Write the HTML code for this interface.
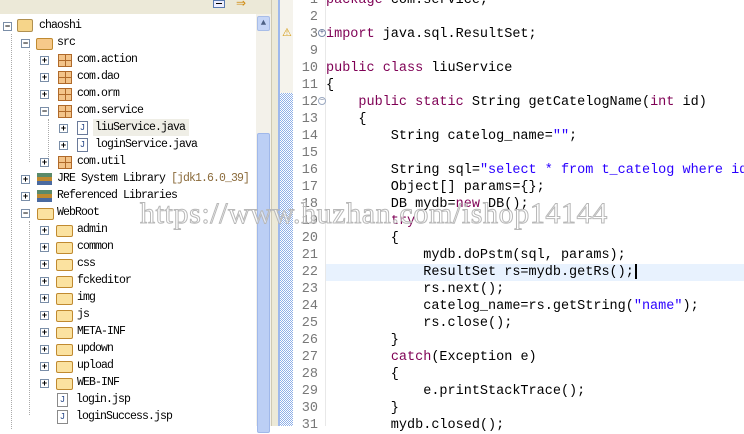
<!DOCTYPE html>
<html><head><meta charset="utf-8"><style>
*{margin:0;padding:0;box-sizing:border-box}
body{width:744px;height:426px;overflow:hidden;background:#fff;position:relative;font-family:"Liberation Mono",monospace}
.abs{position:absolute}
.tr{position:absolute;height:17px;line-height:17px;font-size:11.5px;letter-spacing:-0.9px;color:#000;white-space:nowrap}
.tg{position:absolute;width:9px;height:9px;border:1px solid #7a8ea8;background:#fff;font-size:9px;line-height:7px;text-align:center;color:#000;font-family:"Liberation Sans",sans-serif;font-weight:bold}
.pk{position:absolute;width:14px;height:13px;border:1px solid #b06a2a;background:linear-gradient(90deg,transparent 6px,#b06a2a 6px,#b06a2a 7px,transparent 7px),linear-gradient(0deg,transparent 5px,#b06a2a 5px,#b06a2a 6px,transparent 6px),#f3c48a}
.fd{position:absolute;width:17px;height:12px;border:1px solid #c08a30;border-radius:2px;background:#fbe2a0}
.ln{position:absolute;left:293px;width:25px;text-align:right;font-size:13.5px;color:#787878;height:17px;line-height:17px}
.cd{position:absolute;left:326px;font-size:13.5px;height:17px;line-height:17px;white-space:pre;color:#000}
.k{color:#7f0055}.s{color:#2a00ff}
#tree{position:absolute;left:0;top:3px;width:256px;height:430px}
#code{position:absolute;left:0;top:1px;width:744px;height:430px}
</style></head><body>
<div class="abs" style="left:0;top:0;width:280px;height:14px;background:#ece9d8"></div>
<div class="abs" style="left:213px;top:0;width:12px;height:8px;border:1px solid #5a7ab0;background:#eef;"></div>
<div class="abs" style="left:216px;top:3px;width:6px;height:1px;background:#000"></div>
<div class="abs" style="left:236px;top:0;font-size:12px;color:#d08a10;line-height:8px">⇒</div>
<div class="abs" style="left:256px;top:14px;width:15px;height:412px;background:#f3f1ea"></div>
<div class="abs" style="left:257px;top:16px;width:13px;height:15px;background:#c6d6f7;border:1px solid #a8bde8;border-radius:2px;color:#4d6185;font-size:9px;text-align:center;line-height:13px">▲</div>
<div class="abs" style="left:257px;top:133px;width:13px;height:300px;background:#bccff5;border:1px solid #a0b8ea;border-radius:2px"></div>
<div class="abs" style="left:271px;top:0;width:8px;height:426px;background:#ece9d8;border-left:1px solid #cfc9b4"></div>
<div class="abs" style="left:278px;top:0;width:2px;height:426px;background:#9eb8ec"></div>
<div class="abs" style="left:280px;top:0;width:13px;height:93px;background:#f5f3ec"></div>
<div class="abs" style="left:280px;top:93px;width:13px;height:333px;background:repeating-conic-gradient(#8fb0e8 0 25%,#fff 0 50%) 0 0/2px 2px"></div>
<div class="abs" style="left:282px;top:26px;color:#d49a10;font-size:11px">⚠</div>
<div class="abs" style="left:325px;top:0;width:1px;height:426px;background:#e8e8e8"></div>
<div class="abs" style="left:326px;top:264px;width:418px;height:17px;background:#e8f2fe"></div>
<div id="tree">
<div class="abs" style="left:11px;top:31px;height:395px;border-left:1px dotted #aaa"></div>
<div class="abs" style="left:29px;top:48px;height:111px;border-left:1px dotted #aaa"></div>
<div class="abs" style="left:48px;top:116px;height:42px;border-left:1px dotted #aaa"></div>
<div class="abs" style="left:29px;top:218px;height:194px;border-left:1px dotted #aaa"></div>
<div class="tg" style="left:3px;top:19px">−</div><div class="abs" style="left:17px;top:16px;width:16px;height:13px;background:#f6d58a;border:1px solid #b09050;border-radius:2px"></div><div class="tr" style="left:39px;top:14px">chaoshi</div>
<div class="tg" style="left:21px;top:36px">−</div><div class="fd" style="left:36px;top:35px;background:#f6c98a"></div><div class="tr" style="left:57px;top:31px">src</div>
<div class="tg" style="left:40px;top:53px">+</div><div class="pk" style="left:58px;top:51px"></div><div class="tr" style="left:77px;top:48px">com.action</div>
<div class="tg" style="left:40px;top:70px">+</div><div class="pk" style="left:58px;top:68px"></div><div class="tr" style="left:77px;top:65px">com.dao</div>
<div class="tg" style="left:40px;top:87px">+</div><div class="pk" style="left:58px;top:85px"></div><div class="tr" style="left:77px;top:82px">com.orm</div>
<div class="tg" style="left:40px;top:104px">−</div><div class="pk" style="left:58px;top:102px"></div><div class="tr" style="left:77px;top:99px">com.service</div>
<div class="tg" style="left:59px;top:121px">+</div><div class="abs" style="left:77px;top:118px;width:11px;height:14px;border:1px solid #6a7a9a;background:#fff;font-size:9px;color:#2a4a8a;text-align:center;line-height:12px">J</div><div class="abs" style="left:93px;top:116px;width:96px;height:17px;background:#efeee6"></div><div class="tr" style="left:95px;top:116px">liuService.java</div>
<div class="tg" style="left:59px;top:138px">+</div><div class="abs" style="left:77px;top:135px;width:11px;height:14px;border:1px solid #6a7a9a;background:#fff;font-size:9px;color:#2a4a8a;text-align:center;line-height:12px">J</div><div class="tr" style="left:95px;top:133px">loginService.java</div>
<div class="tg" style="left:40px;top:155px">+</div><div class="pk" style="left:58px;top:153px"></div><div class="tr" style="left:77px;top:150px">com.util</div>
<div class="tg" style="left:21px;top:172px">+</div><div class="abs" style="left:37px;top:170px;width:15px;height:12px;background:linear-gradient(#5a8a6a 0 33%,#c08a30 33% 66%,#4a6aa0 66%)"></div><div class="tr" style="left:57px;top:167px">JRE System Library <span style="color:#8a6a3a">[jdk1.6.0_39]</span></div>
<div class="tg" style="left:21px;top:189px">+</div><div class="abs" style="left:37px;top:187px;width:15px;height:12px;background:linear-gradient(#5a8a6a 0 33%,#c08a30 33% 66%,#4a6aa0 66%)"></div><div class="tr" style="left:57px;top:184px">Referenced Libraries</div>
<div class="tg" style="left:21px;top:206px">−</div><div class="fd" style="left:37px;top:205px"></div><div class="tr" style="left:57px;top:201px">WebRoot</div>
<div class="tg" style="left:40px;top:223px">+</div><div class="fd" style="left:56px;top:222px"></div><div class="tr" style="left:77px;top:218px">admin</div>
<div class="tg" style="left:40px;top:240px">+</div><div class="fd" style="left:56px;top:239px"></div><div class="tr" style="left:77px;top:235px">common</div>
<div class="tg" style="left:40px;top:257px">+</div><div class="fd" style="left:56px;top:256px"></div><div class="tr" style="left:77px;top:252px">css</div>
<div class="tg" style="left:40px;top:274px">+</div><div class="fd" style="left:56px;top:273px"></div><div class="tr" style="left:77px;top:269px">fckeditor</div>
<div class="tg" style="left:40px;top:291px">+</div><div class="fd" style="left:56px;top:290px"></div><div class="tr" style="left:77px;top:286px">img</div>
<div class="tg" style="left:40px;top:308px">+</div><div class="fd" style="left:56px;top:307px"></div><div class="tr" style="left:77px;top:303px">js</div>
<div class="tg" style="left:40px;top:325px">+</div><div class="fd" style="left:56px;top:324px"></div><div class="tr" style="left:77px;top:320px">META-INF</div>
<div class="tg" style="left:40px;top:342px">+</div><div class="fd" style="left:56px;top:341px"></div><div class="tr" style="left:77px;top:337px">updown</div>
<div class="tg" style="left:40px;top:359px">+</div><div class="fd" style="left:56px;top:358px"></div><div class="tr" style="left:77px;top:354px">upload</div>
<div class="tg" style="left:40px;top:376px">+</div><div class="fd" style="left:56px;top:375px"></div><div class="tr" style="left:77px;top:371px">WEB-INF</div>
<div class="abs" style="left:57px;top:390px;width:11px;height:14px;border:1px solid #8a8a8a;background:#fff;font-size:9px;color:#2a4a8a;text-align:center;line-height:12px">J</div><div class="tr" style="left:76px;top:388px">login.jsp</div>
<div class="abs" style="left:57px;top:407px;width:11px;height:14px;border:1px solid #8a8a8a;background:#fff;font-size:9px;color:#2a4a8a;text-align:center;line-height:12px">J</div><div class="tr" style="left:76px;top:405px">loginSuccess.jsp</div>
</div>
<div id="code">
<div class="ln" style="top:-9px">1</div><div class="ln" style="top:8px">2</div><div class="ln" style="top:25px">3</div><div class="ln" style="top:42px">9</div>
<div class="ln" style="top:59px">10</div><div class="ln" style="top:76px">11</div><div class="ln" style="top:93px">12</div><div class="ln" style="top:110px">13</div>
<div class="ln" style="top:127px">14</div><div class="ln" style="top:144px">15</div><div class="ln" style="top:161px">16</div><div class="ln" style="top:178px">17</div>
<div class="ln" style="top:195px">18</div><div class="ln" style="top:212px">19</div><div class="ln" style="top:229px">20</div><div class="ln" style="top:246px">21</div>
<div class="ln" style="top:263px">22</div><div class="ln" style="top:280px">23</div><div class="ln" style="top:297px">24</div><div class="ln" style="top:314px">25</div>
<div class="ln" style="top:331px">26</div><div class="ln" style="top:348px">27</div><div class="ln" style="top:365px">28</div><div class="ln" style="top:382px">29</div>
<div class="ln" style="top:399px">30</div><div class="ln" style="top:416px">31</div>
<div class="abs" style="left:318px;top:28px;width:8px;height:8px;border:1px solid #7a8aa8;border-radius:50%;font-size:7px;line-height:6px;text-align:center;color:#3a4a7a">+</div>
<div class="abs" style="left:318px;top:96px;width:8px;height:8px;border:1px solid #9aa8c0;border-radius:50%;font-size:7px;line-height:6px;text-align:center;color:#5a6a8a">−</div>
<div class="cd" style="top:-9px"><span class="k">package</span> com.service;</div>
<div class="cd" style="top:25px"><span class="k">import</span> java.sql.ResultSet;</div>
<div class="cd" style="top:59px"><span class="k">public class</span> liuService</div>
<div class="cd" style="top:76px">{</div>
<div class="cd" style="top:93px">    <span class="k">public static</span> String getCatelogName(<span class="k">int</span> id)</div>
<div class="cd" style="top:110px">    {</div>
<div class="cd" style="top:127px">        String catelog_name=<span class="s">""</span>;</div>
<div class="cd" style="top:161px">        String sql=<span class="s">"select * from t_catelog where id</span></div>
<div class="cd" style="top:178px">        Object[] params={};</div>
<div class="cd" style="top:195px">        DB mydb=<span class="k">new</span> DB();</div>
<div class="cd" style="top:212px">        <span class="k">try</span></div>
<div class="cd" style="top:229px">        {</div>
<div class="cd" style="top:246px">            mydb.doPstm(sql, params);</div>
<div class="cd" style="top:263px">            ResultSet rs=mydb.getRs();<span style="display:inline-block;width:2px;height:15px;background:#000;vertical-align:middle;margin-left:1px"></span></div>
<div class="cd" style="top:280px">            rs.next();</div>
<div class="cd" style="top:297px">            catelog_name=rs.getString(<span class="s">"name"</span>);</div>
<div class="cd" style="top:314px">            rs.close();</div>
<div class="cd" style="top:331px">        }</div>
<div class="cd" style="top:348px">        <span class="k">catch</span>(Exception e)</div>
<div class="cd" style="top:365px">        {</div>
<div class="cd" style="top:382px">            e.printStackTrace();</div>
<div class="cd" style="top:399px">        }</div>
<div class="cd" style="top:416px">        mydb.closed();</div>
</div>
<div class="abs" style="left:140px;top:197px;font-family:'Liberation Serif',serif;font-size:30px;color:rgba(255,255,255,0.5);-webkit-text-stroke:1px #b8b8b8;letter-spacing:0.6px;white-space:nowrap">https://www.huzhan.com/ishop14144</div>
</body></html>
